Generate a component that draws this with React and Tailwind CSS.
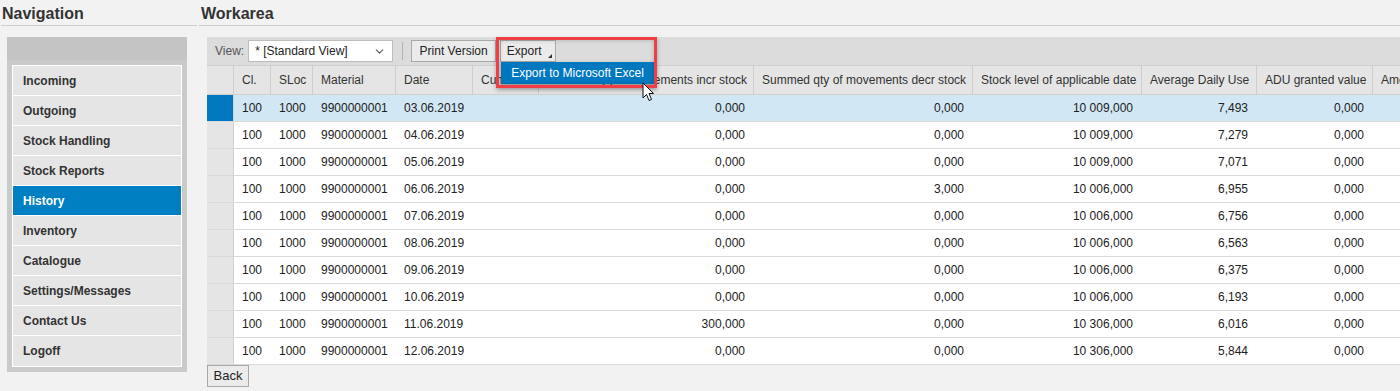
import React from 'react'
import { ChevronDown } from 'lucide-react'

const navItems = ['Incoming', 'Outgoing', 'Stock Handling', 'Stock Reports', 'History', 'Inventory', 'Catalogue', 'Settings/Messages', 'Contact Us', 'Logoff']

const columns = [
  { label: 'Cl.', w: 'w-[37px]' },
  { label: 'SLoc', w: 'w-[42px]' },
  { label: 'Material', w: 'w-[83px]' },
  { label: 'Date', w: 'w-[77px]' },
  { label: 'Cum. stock level', w: 'w-[66px]' },
  { label: 'Summed qty of movements incr stock', w: 'w-[215px]', num: true },
  { label: 'Summed qty of movements decr stock', w: 'w-[219px]', num: true },
  { label: 'Stock level of applicable date', w: 'w-[169px]', num: true },
  { label: 'Average Daily Use', w: 'w-[115px]', num: true },
  { label: 'ADU granted value', w: 'w-[116px]', num: true },
  { label: 'Amount of days', w: 'w-[140px]', num: true },
]

const rows = [
  ['03.06.2019', '0,000', '0,000', '10 009,000', '7,493'],
  ['04.06.2019', '0,000', '0,000', '10 009,000', '7,279'],
  ['05.06.2019', '0,000', '0,000', '10 009,000', '7,071'],
  ['06.06.2019', '0,000', '3,000', '10 006,000', '6,955'],
  ['07.06.2019', '0,000', '0,000', '10 006,000', '6,756'],
  ['08.06.2019', '0,000', '0,000', '10 006,000', '6,563'],
  ['09.06.2019', '0,000', '0,000', '10 006,000', '6,375'],
  ['10.06.2019', '0,000', '0,000', '10 006,000', '6,193'],
  ['11.06.2019', '300,000', '0,000', '10 306,000', '6,016'],
  ['12.06.2019', '0,000', '0,000', '10 306,000', '5,844'],
]

export default function App() {
  return (
    <div className="flex h-[391px] overflow-hidden bg-[#f2f2f2] font-['Liberation_Sans',Arial,sans-serif] text-[12px] text-[#333]">
      {/* navigation */}
      <aside className="w-[199px] shrink-0">
        <h2 className="ml-[1px] w-[196px] border-b border-[#cfcfcf] pl-[1px] pt-[3px] text-[16px] font-bold leading-[22px] text-[#333]">Navigation</h2>
        <div className="ml-[7px] mt-[11px] w-[180px] bg-[#cacaca] px-[5px] pb-[5px]">
          <div className="-mx-[5px] h-[23px] bg-[#c4c4c4]" />
          <ul className="mt-[5px] border border-white">
            {navItems.map((item, i) => (
              <li
                key={item}
                className={`h-[30px] pl-[10px] pt-[1px] text-[12px] font-bold leading-[28px] ${i < navItems.length - 1 ? 'border-b border-white' : ''} ${item === 'History' ? 'bg-[#0080c3] text-white' : 'bg-[#e5e5e5] text-[#333]'}`}
              >
                {item}
              </li>
            ))}
          </ul>
        </div>
      </aside>

      {/* workarea */}
      <main className="min-w-0 flex-1">
        <h2 className="border-b border-[#cfcfcf] pl-[2px] pt-[3px] text-[16px] font-bold leading-[22px] text-[#333]">Workarea</h2>
        <div className="ml-[8px] mt-[11px]">
          <div className="flex h-[28px] items-center bg-[#dcdcdc] pl-[8px]">
            <span className="text-[#555]">View:</span>
            <div className="ml-[4px] flex h-[22px] w-[145px] items-center justify-between border border-[#bdbdbd] bg-white pl-[6px] pr-[6px] text-[#222]">
              <span>* [Standard View]</span>
              <ChevronDown size={13} strokeWidth={2} className="text-[#555]" />
            </div>
            <div className="ml-[9px] h-[18px] w-[1px] bg-[#b3b3b3]" />
            <button className="ml-[8px] h-[22px] w-[85px] border border-[#a9a9a9] bg-[#ebebeb] text-[12px] text-[#222]">Print Version</button>
            <div className="relative ml-[4px]">
              <button className="relative h-[22px] w-[56px] border border-[#a9a9a9] bg-[#ebebeb] pr-[8px] text-[12px] text-[#222]">
                Export
                <span className="absolute bottom-[3px] right-[3px] h-0 w-0 border-b-[4px] border-l-[4px] border-b-[#333] border-l-transparent" />
              </button>
              <div className="absolute left-[1px] top-full z-10 h-[22px] w-[154px] bg-[#0078c0] pl-[10px] text-[12px] leading-[22px] text-white shadow-[0_2px_4px_rgba(0,0,0,0.35)]">
                Export to Microsoft Excel
              </div>
              <div className="pointer-events-none absolute -left-[4px] -top-[3px] z-20 h-[51px] w-[161px] border-[3px] border-[#ee3f45] shadow-[inset_0_0_5px_rgba(0,0,0,0.2),0_2px_4px_rgba(0,0,0,0.3)]" />
              <svg className="absolute left-[142px] top-[42px] z-30" width="13" height="20" viewBox="0 0 13 20">
                <path d="M1 1 L1 16 L4.5 12.5 L7 18.5 L9.5 17.5 L7 11.5 L11.5 11.5 Z" fill="white" stroke="#111" strokeWidth="1" strokeLinejoin="round" />
              </svg>
            </div>
          </div>

          {/* table */}
          <div className="overflow-hidden">
            <div className="flex h-[30px] w-max border-y border-[#cfcfcf] bg-[#e5e5e5] text-[#333]">
              <div className="w-[27px] shrink-0 border-r border-[#cfcfcf]" />
              {columns.map((c) => (
                <div key={c.label} className={`${c.w} shrink-0 overflow-hidden whitespace-nowrap border-r border-[#cfcfcf] pl-[8px] leading-[28px]`}>
                  {c.label}
                </div>
              ))}
            </div>
            {rows.map((r, i) => {
              const sel = i === 0
              const cells = ['100', '1000', '9900000001', r[0], '', r[1], r[2], r[3], r[4], '0,000', '']
              return (
                <div key={r[0]} className={`flex h-[27px] w-max border-b border-[#dadada] text-[#222] ${sel ? 'bg-[#d1e7f4]' : 'bg-white'}`}>
                  <div className={`w-[27px] shrink-0 border-r border-[#cfcfcf] ${sel ? 'bg-[#0079c1]' : 'bg-[#e5e5e5]'}`} />
                  {columns.map((c, j) => (
                    <div
                      key={c.label}
                      className={`${c.w} shrink-0 overflow-hidden whitespace-nowrap leading-[26px] ${c.num ? 'pr-[8px] text-right' : 'pl-[8px]'} ${j < columns.length - 1 ? 'border-r border-transparent' : ''}`}
                    >
                      {cells[j]}
                    </div>
                  ))}
                </div>
              )
            })}
          </div>
          <button className="h-[22px] w-[42px] border border-[#a9a9a9] bg-[#ebebeb] text-[13px] text-[#222]">Back</button>
        </div>
      </main>
    </div>
  )
}
